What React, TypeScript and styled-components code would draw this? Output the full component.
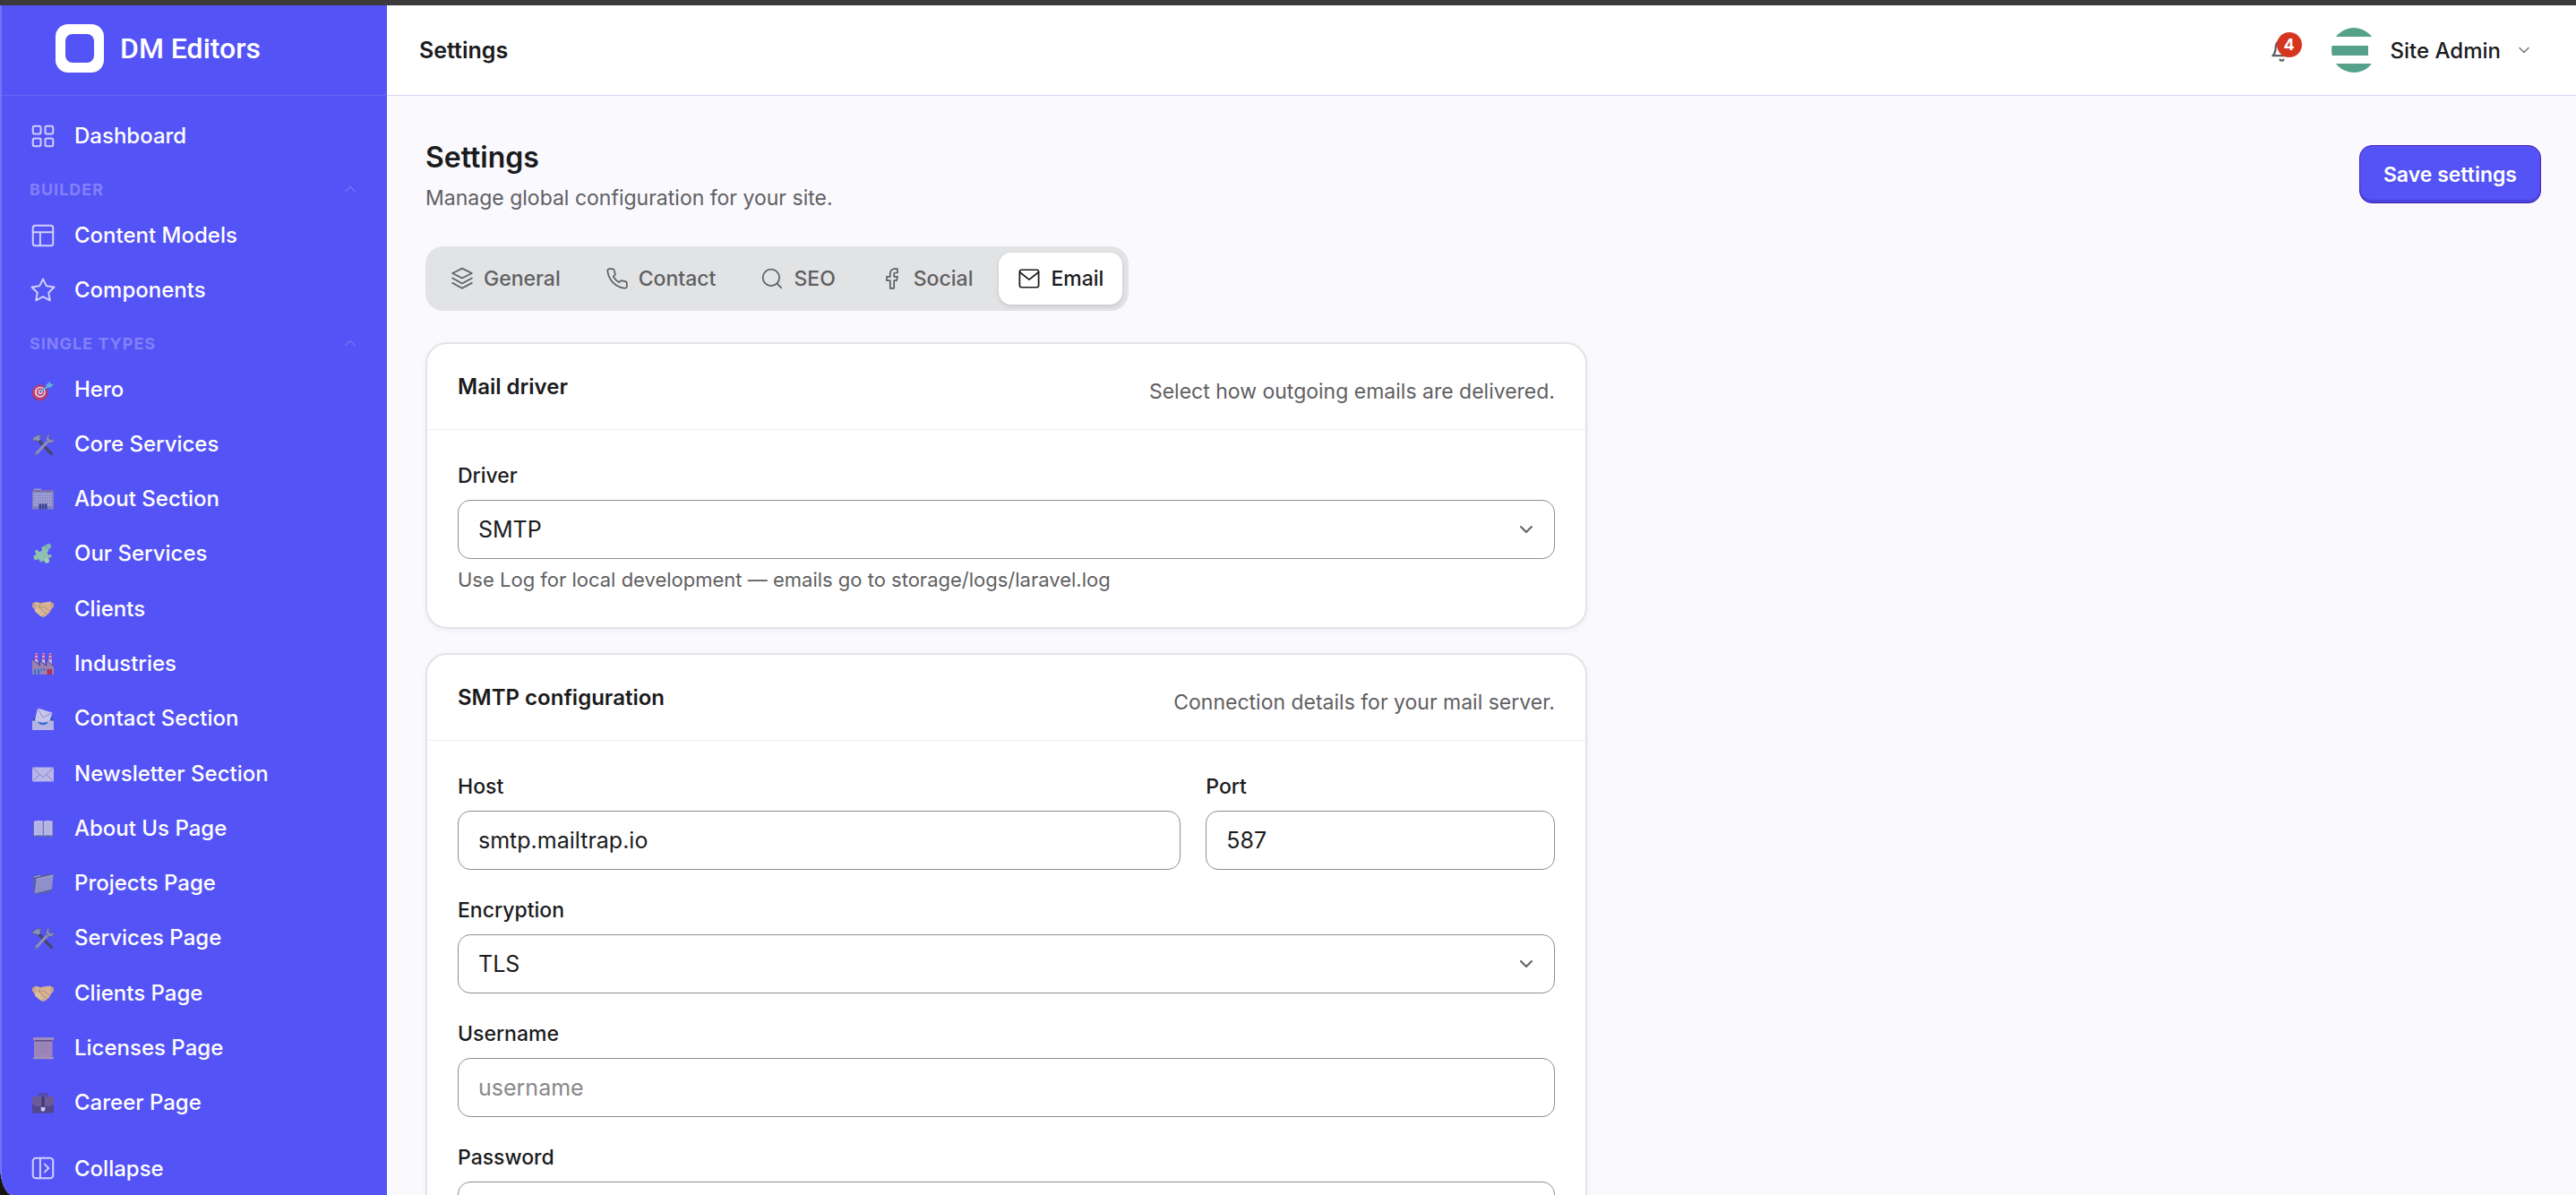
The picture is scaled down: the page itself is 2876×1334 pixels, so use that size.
import React from "react";
import styled, { createGlobalStyle } from "styled-components";

const color = {
  brand: "#5453f6",
  brandDark: "#4a22b4",
  ink: "#1b1b1d",
  muted: "#5f6062",
  border: "#8f8f92",
  canvas: "#faf9fe",
};

const GlobalStyle = createGlobalStyle`
  *, *::before, *::after { box-sizing: border-box; }
  body {
    margin: 0;
    background: #17150e;
    color: ${color.ink};
    font-family: Inter, "Liberation Sans", sans-serif;
    font-size: 23px;
  }
  h1, h2, p, ul { margin: 0; padding: 0; }
  ul { list-style: none; }
  button, input, select { font: inherit; color: inherit; }
`;

/* ---------- shell ---------- */

const Shell = styled.div`
  display: flex;
  flex-direction: column;
  height: 100vh;
  overflow: hidden;
  border-bottom-left-radius: 14px 34px;
  background: ${color.canvas};
`;

const TopEdge = styled.div`
  flex: none;
  height: 6px;
  background: #3b3b3b;
`;

const Columns = styled.div`
  display: flex;
  flex: 1;
  min-height: 0;
`;

/* ---------- sidebar ---------- */

const Sidebar = styled.aside`
  display: flex;
  flex: none;
  flex-direction: column;
  width: 432px;
  border-left: 2px solid #7574f8;
  background: ${color.brand};
  color: #fff;
`;

const Brand = styled.a`
  display: flex;
  flex: none;
  align-items: center;
  gap: 18px;
  height: 101px;
  padding: 0 60px 4px;
  border-bottom: 1px solid #6766f7;
  color: #fff;
  font-family: Roboto, "Liberation Sans", sans-serif;
  font-size: 32px;
  font-weight: 500;
  text-decoration: none;
`;

const BrandMark = styled.svg`
  width: 54px;
  height: 54px;
`;

const Nav = styled.nav`
  display: flex;
  flex: 1;
  flex-direction: column;
  min-height: 0;
  padding: 14px 14px 0;
`;

const NavList = styled.ul<{ $fill?: boolean }>`
  display: grid;
  grid-auto-rows: ${(p) => (p.$fill ? "1fr" : "61px")};
  flex: ${(p) => (p.$fill ? "1" : "none")};
`;

const NavLink = styled.a`
  display: flex;
  align-items: center;
  gap: 20px;
  height: 100%;
  padding: 0 17px;
  border-radius: 12px;
  color: #fff;
  font-size: 24px;
  font-weight: 500;
  line-height: 32px;
  text-decoration: none;
`;

const NavIcon = styled.svg`
  flex: none;
  width: 30px;
  height: 30px;
  overflow: visible;
`;

const SectionToggle = styled.button`
  display: flex;
  flex: none;
  align-items: center;
  justify-content: space-between;
  height: 50px;
  padding: 8px 17px 0 17px;
  border: 0;
  background: none;
  color: #8281f9;
  font-size: 18px;
  font-weight: 700;
  letter-spacing: 1px;
  text-transform: uppercase;
`;

const SidebarFoot = styled.div`
  flex: none;
  height: 72px;
  padding: 12px 14px 0;
`;

const CollapseButton = styled.button`
  display: flex;
  align-items: center;
  gap: 20px;
  width: 100%;
  height: 60px;
  padding: 0 17px;
  border: 0;
  background: none;
  color: #fff;
  font-size: 24px;
  font-weight: 500;
`;

/* ---------- top bar ---------- */

const Page = styled.div`
  display: flex;
  flex: 1;
  flex-direction: column;
  min-width: 0;
`;

const TopBar = styled.header`
  display: flex;
  flex: none;
  align-items: center;
  justify-content: space-between;
  height: 101px;
  padding: 0 48px 0 36px;
  border-bottom: 1px solid #d8d5fb;
  background: #fff;
`;

const TopTitle = styled.p`
  font-size: 25px;
  font-weight: 600;
`;

const TopActions = styled.div`
  display: flex;
  align-items: center;
  gap: 42px;
`;

const BellButton = styled.button`
  position: relative;
  display: flex;
  padding: 0;
  border: 0;
  background: none;
  color: ${color.muted};
`;

const Badge = styled.span`
  position: absolute;
  top: -7px;
  right: -9px;
  display: grid;
  place-items: center;
  width: 28px;
  height: 28px;
  border-radius: 50%;
  background: #d53620;
  color: #fff;
  font-size: 18px;
  font-weight: 700;
`;

const UserButton = styled.button`
  display: flex;
  align-items: center;
  gap: 16px;
  padding: 0;
  border: 0;
  background: none;
  font-size: 24px;
  font-weight: 500;

  & > svg:last-child {
    color: #77777b;
  }
`;

/* ---------- settings page ---------- */

const Main = styled.main`
  flex: 1;
  min-height: 0;
  padding: 47px 39px 47px 43px;
  overflow: auto;
  scrollbar-width: none;
`;

const PageHead = styled.div`
  display: flex;
  align-items: center;
  justify-content: space-between;
  margin-bottom: 38px;
`;

const PageTitle = styled.h1`
  margin-bottom: 7px;
  font-size: 32px;
  font-weight: 600;
  line-height: 44px;
`;

const Muted = styled.p`
  color: ${color.muted};
  font-size: 23px;
  line-height: 32px;
`;

const SaveButton = styled.button`
  height: 65px;
  margin-bottom: 2px;
  padding: 0 26px;
  border: 1px solid ${color.brandDark};
  border-radius: 14px;
  background: ${color.brand};
  box-shadow: inset 0 -3px 1px #4945dc;
  color: #fff;
  font-size: 23px;
  font-weight: 600;
`;

const Tabs = styled.div`
  display: inline-flex;
  gap: 8px;
  padding: 7px;
  border-radius: 20px;
  background: #e2e3e5;
`;

const Tab = styled.button<{ $active: boolean }>`
  display: flex;
  align-items: center;
  gap: 11px;
  height: 58px;
  padding: 0 21px;
  border: 0;
  border-radius: 14px;
  background: ${(p) => (p.$active ? "#fff" : "transparent")};
  box-shadow: ${(p) => (p.$active ? "0 2px 5px rgba(0, 0, 0, 0.13)" : "none")};
  color: ${(p) => (p.$active ? color.ink : color.muted)};
  font-size: 23px;
  font-weight: 500;
`;

const Form = styled.form`
  display: grid;
  gap: 27px;
  max-width: 1297px;
  margin-top: 35px;
`;

const Card = styled.section`
  border: 2px solid #e4e4e7;
  border-radius: 24px;
  background: #fff;
  box-shadow: 0 2px 6px rgba(30, 30, 60, 0.05);
`;

const CardHead = styled.div`
  display: flex;
  align-items: flex-end;
  justify-content: space-between;
  height: 96px;
  padding: 0 34px 26px;
  border-bottom: 1px solid #efeff1;
`;

const CardTitle = styled.h2`
  font-size: 24px;
  font-weight: 600;
  line-height: 42px;
`;

const CardBody = styled.div`
  display: grid;
  grid-template-columns: repeat(12, 1fr);
  gap: 28px;
  padding: 34px 34px 38px;
`;

const Field = styled.div<{ $span: number }>`
  display: flex;
  flex-direction: column;
  grid-column: span ${(p) => p.$span};
`;

const Label = styled.label`
  margin-bottom: 10px;
  font-size: 23px;
  font-weight: 500;
  line-height: 34px;
`;

const Input = styled.input`
  width: 100%;
  height: 66px;
  padding: 0 22px;
  border: 1px solid ${color.border};
  border-radius: 14px;
  outline: 0;
  background: #fff;
  font-size: 25px;

  &::placeholder {
    color: #88888b;
    opacity: 1;
  }
`;

const SelectWrap = styled.div`
  display: grid;
  align-items: center;

  & > * {
    grid-area: 1 / 1;
  }

  & > svg {
    justify-self: end;
    margin-right: 20px;
    color: ${color.muted};
    pointer-events: none;
  }
`;

const Select = styled(Input).attrs({ as: "select" })`
  appearance: none;
`;

const Hint = styled.p`
  margin-top: 8px;
  color: ${color.muted};
  font-size: 22px;
  line-height: 30px;
`;

/* ---------- line icons ---------- */

const linePaths: Record<string, React.ReactNode> = {
  grid: (
    <>
      <rect x="3" y="3" width="7" height="7" rx="1.4" />
      <rect x="14" y="3" width="7" height="7" rx="1.4" />
      <rect x="3" y="14" width="7" height="7" rx="1.4" />
      <rect x="14" y="14" width="7" height="7" rx="1.4" />
    </>
  ),
  layout: (
    <>
      <rect x="3" y="3" width="18" height="18" rx="2" />
      <path d="M3 9h18M9.5 9v12" />
    </>
  ),
  star: (
    <path d="M12 2l3.09 6.26L22 9.27l-5 4.87 1.18 6.88L12 17.77l-6.18 3.25L7 14.14 2 9.27l6.91-1.01z" />
  ),
  collapse: (
    <>
      <rect x="3" y="3" width="18" height="18" rx="2.5" />
      <path d="M9.5 3v18M13.5 8.5l3.5 3.5-3.5 3.5" />
    </>
  ),
  layers: (
    <path d="M12 1.500L2 6.500l10 5 10-5zM2 16.500l10 5.500 10-5.500M2 11.500l10 5.500 10-5.500" />
  ),
  phone: (
    <path d="M22 16.92v3a2 2 0 0 1-2.18 2 19.79 19.79 0 0 1-8.63-3.07 19.5 19.5 0 0 1-6-6A19.79 19.79 0 0 1 2.12 4.18 2 2 0 0 1 4.11 2h3a2 2 0 0 1 2 1.72c.13.96.36 1.9.7 2.81a2 2 0 0 1-.45 2.11L8.09 9.91a16 16 0 0 0 6 6l1.27-1.27a2 2 0 0 1 2.11-.45c.91.34 1.85.57 2.81.7A2 2 0 0 1 22 16.92z" />
  ),
  search: (
    <>
      <circle cx="11" cy="11" r="8.5" />
      <path d="M21.500 21.500l-4.500-4.500" />
    </>
  ),
  facebook: (
    <path d="M17.500 2h-3A4.500 4.500 0 0 0 10 6.500V10H6.500v4H10v8h4v-8h2.700l.8-4H14V7a1 1 0 0 1 1-1h2.500z" />
  ),
  mail: (
    <>
      <rect x="2.200" y="3" width="19.600" height="18" rx="2" />
      <path d="M2.500 5.500L12 13l9.500-7.500" />
    </>
  ),
  bell: (
    <path d="M18 8A6 6 0 0 0 6 8c0 7-3 9-3 9h18s-3-2-3-9M13.73 21a2 2 0 0 1-3.46 0" />
  ),
  down: <path d="M6 9l6 6 6-6" />,
  up: <path d="M6 15l6-6 6 6" />,
};

type LineProps = { name: string; size?: number; stroke?: number; opacity?: number };

const Line = ({ name, size = 26, stroke = 1.6, opacity = 1 }: LineProps) => (
  <svg
    width={size}
    height={size}
    viewBox="0 0 24 24"
    fill="none"
    stroke="currentColor"
    strokeWidth={stroke}
    strokeLinecap="round"
    strokeLinejoin="round"
    opacity={opacity}
    aria-hidden="true"
  >
    {linePaths[name]}
  </svg>
);

/* ---------- pictograms of the content types (30 x 30 grid, 25 px drawing) ---------- */

const art: Record<string, React.ReactNode> = {
  target: (
    <>
      <circle cx="11.5" cy="18.5" r="9" fill="#a83a72" />
      <circle cx="11.5" cy="18" r="7.8" fill="#c2406e" />
      <circle cx="11.8" cy="17.8" r="6" fill="#d9cdec" />
      <circle cx="12" cy="17.6" r="4.3" fill="#c2406e" />
      <circle cx="12.2" cy="17.4" r="2.6" fill="#d9cdec" />
      <circle cx="12.4" cy="17.2" r="1.2" fill="#a83a72" />
      <path d="M12.5 17l9-6.5" stroke="#5cb0d8" strokeWidth="1.8" />
      <path d="M19 12.500l-.5-3 4.500-3.500 .4 2.600 3.600.8-4 3.400z" fill="#5fb2dd" />
    </>
  ),
  tools: (
    <>
      <path d="M9 9.500l15.500 16" stroke="#45476f" strokeWidth="3.400" strokeLinecap="round" />
      <path d="M3 10.500c1-4 5-6.500 11-6l-2.500 2.200 1 2.800-3 2.500-2.500-1.700-2 .7z" fill="#8d90b8" stroke="#53557f" strokeWidth=".7" />
      <path d="M20.500 11.500L7 26" stroke="#8f92b8" strokeWidth="3" strokeLinecap="round" />
      <path d="M22.500 4l-1.300 4 2.300 2.300 3.800-1.500c.3 3.200-2.300 5.400-5.800 4.500l-2.500-2.400C18 7.500 19.500 4.500 22.500 4z" fill="#8d90bd" stroke="#565985" strokeWidth=".7" />
      <circle cx="7" cy="26" r=".9" fill="#54567d" />
    </>
  ),
  office: (
    <>
      <rect x="5" y="3.500" width="8" height="2" fill="#9c98c4" />
      <rect x="3" y="5" width="24" height="21.500" fill="#8483bd" />
      <rect x="3" y="5" width="24" height="2" fill="#7a6ea6" />
      <path d="M4.500 9.500h21M4.500 12.500h21M4.500 15.500h21M4.500 18.500h21M4.500 21.500h21" stroke="#a9ade6" strokeWidth="1.800" strokeDasharray="1.900 .7" />
      <rect x="10.500" y="20.500" width="9" height="6" fill="#3a4190" />
      <path d="M13.500 20.500v6M16.500 20.500v6" stroke="#7f8cd8" strokeWidth=".7" />
    </>
  ),
  puzzle: (
    <g transform="rotate(-27 15 15)">
      <rect x="8" y="8" width="14.500" height="14.500" rx="1.200" fill="#8fc0b2" />
      <circle cx="15.200" cy="23.800" r="2.900" fill="#a3cdb9" />
      <circle cx="6.300" cy="15.200" r="2.900" fill="#8fc0b2" />
      <circle cx="24.200" cy="10.500" r="2.900" fill="#7fb4b0" />
      <rect x="19" y="8" width="4" height="5" fill="#7fb4b0" />
      <circle cx="14" cy="9" r="2.600" fill={color.brand} />
      <circle cx="21.800" cy="17.500" r="2.300" fill={color.brand} />
      <path d="M8.500 22.500h4M18 22.500h4.500" stroke="#5f9490" strokeWidth=".9" />
    </g>
  ),
  handshake: (
    <>
      <path
        d="M3 9l4-2.200L11.500 8l3.500-.3 4-.6 4-.5L27 9l-.3 3.500-2.500 2.500-1.700 3.500-3 3-3 2.200-3-.2-3-2-4-3.500L5 14.500 3 12z"
        fill="#d6b394"
      />
      <path d="M3 9l4-2.200v5.500L5 14.500 3 12zM27 9l-4-2.400.5 5.900 1.200 1.900L26.700 12.500z" fill="#c6a08c" />
      <path
        d="M12.500 8.500L10 13c1.500 1.300 3.200.2 4.500-1.200 3 1 5.500 3 8 5.700M12.500 15.500l6.500 5M10.500 18l5 4"
        stroke="#a5836f"
        strokeWidth=".9"
        strokeLinecap="round"
      />
      <path d="M7.500 17.500l2-2.300M9.700 19.500l2.200-2.500M12.300 21.500l2-2.300" stroke="#e7cfb0" strokeWidth="1.400" strokeLinecap="round" />
    </>
  ),
  factory: (
    <>
      <path d="M6 12l.7-9h2l.7 11M13.800 13l.7-10h2l.7 12M21.300 13l.7-10h2l1 12" fill="#c9b9de" />
      <path d="M6.500 5h2.400M6.300 9h2.800M14.300 5h2.400M14.100 9h2.800M21.800 5h2.400M21.600 9h2.900" stroke="#d0406d" strokeWidth="2" />
      <path d="M3 27V10l8.500 7v-5.500l7.500 6V11l8 7v9z" fill="#9a82ac" />
      <path d="M3 10l8.500 7v-5.500l7.500 6V11l8 7" fill="none" stroke="#5b4c8c" strokeWidth="1" />
      <path d="M5 21h6v6H5zM12.500 20h4.500v3h-4.500z" fill="#3f6fcb" />
      <path d="M8 21v6M14.700 20v3" stroke="#aebcee" strokeWidth=".8" />
      <rect x="19.500" y="21" width="5.500" height="6" fill="#b0305f" />
    </>
  ),
  inbox: (
    <>
      <path d="M3 17.500l3-4h18l3 4-1 5H4z" fill="#2b52ad" />
      <path d="M9 3.500L25.500 8.500 22 19.500c-4 2-9 2-14 0l-2-3z" fill="#c6c5ec" />
      <path d="M9 3.500l6 10.500 10.500-5.500" fill="none" stroke="#8987c4" strokeWidth=".9" />
      <path d="M3 17.500h6c2 5.500 10 5.500 12 0h6V28H3z" fill="#b6b4e6" />
      <path d="M9 18.500c4 1.500 8 1.500 12 0-2 5-10 5-12 0z" fill="#2f6bd0" />
    </>
  ),
  envelope: (
    <>
      <rect x="3" y="7.500" width="24" height="16" rx=".8" fill="#b9b7ea" />
      <path d="M3.500 8l10 9.500c1 .8 2 .8 3 0l10-9.500M3.500 23l8-7.500M26.500 23l-8-7.500" fill="none" stroke="#8583c6" strokeWidth="1" />
    </>
  ),
  book: (
    <>
      <path d="M4 7.500h22.500V24H17l-2 .8-2-.8H4z" fill="#5a6bb0" />
      <path d="M5 6.500c3.500-.8 7-.8 10 0v16.300c-3-.8-6.500-.8-10 0zM15.500 6.500c3.500-.8 7-.8 10 0v16.300c-3-.8-6.500-.8-10 0z" fill="#bab8e8" />
      <path d="M7 10h6M7 13h6M7 16h6M7 19h6M17.500 10h6M17.500 13h6M17.500 16h6M17.500 19h6" stroke="#a19fda" strokeWidth=".8" />
      <path d="M15.200 7v16" stroke="#6664a8" strokeWidth="1" />
    </>
  ),
  folder: (
    <>
      <path d="M4 7l7-1.800 1.500 1.200L26 4v3L23 25 5 27z" fill="#59609a" />
      <path d="M7.500 10.500L26.500 6l-1.500 15.500L5.500 26.500z" fill="#8f90ca" />
      <path d="M7.500 10.500L26.500 6M5 8l7-1.500" stroke="#b4b5e6" strokeWidth=".9" />
    </>
  ),
  scroll: (
    <>
      <rect x="5" y="5" width="20.500" height="21" fill="#9c86b8" />
      <path d="M8 11h14M8 14h14M8 17h14M8 20h14" stroke="#9079b2" strokeWidth=".8" />
      <rect x="4" y="3" width="23" height="3.400" rx="1" fill="#a18dbb" />
      <path d="M5.500 6.800h20" stroke="#544488" strokeWidth="1.400" />
      <rect x="4" y="25" width="23" height="2.200" rx="1" fill="#a592bd" />
    </>
  ),
  briefcase: (
    <>
      <path d="M11 8V5.500h8V8" fill="none" stroke="#574a7f" strokeWidth="1.800" />
      <rect x="3" y="8" width="24" height="18.500" rx="1.200" fill="#54468c" />
      <path d="M3 9.500c0-1 .5-1.500 1.500-1.500h21c1 0 1.500.5 1.500 1.500V16l-4 3H7l-4-3z" fill="#6c5b98" />
      <path d="M13.500 8h3v11h-3z" fill="#44376f" />
      <path d="M12.700 20h4.600v3.500L15 25l-2.300-1.500z" fill="#c3cbf0" />
    </>
  ),
};

const Art = ({ name }: { name: string }) => (
  <NavIcon viewBox="0 0 30 30" fill="none" aria-hidden="true">
    {art[name]}
  </NavIcon>
);

/* ---------- data ---------- */

const builderLinks = [
  { label: "Content Models", icon: "layout" },
  { label: "Components", icon: "star" },
];

const singleTypes = [
  { label: "Hero", icon: "target" },
  { label: "Core Services", icon: "tools" },
  { label: "About Section", icon: "office" },
  { label: "Our Services", icon: "puzzle" },
  { label: "Clients", icon: "handshake" },
  { label: "Industries", icon: "factory" },
  { label: "Contact Section", icon: "inbox" },
  { label: "Newsletter Section", icon: "envelope" },
  { label: "About Us Page", icon: "book" },
  { label: "Projects Page", icon: "folder" },
  { label: "Services Page", icon: "tools" },
  { label: "Clients Page", icon: "handshake" },
  { label: "Licenses Page", icon: "scroll" },
  { label: "Career Page", icon: "briefcase" },
];

const tabs = [
  { label: "General", icon: "layers" },
  { label: "Contact", icon: "phone" },
  { label: "SEO", icon: "search" },
  { label: "Social", icon: "facebook" },
  { label: "Email", icon: "mail" },
];

/* ---------- parts ---------- */

const SideNav = () => (
  <Sidebar>
    <Brand href="#">
      <BrandMark viewBox="0 0 54 54" aria-hidden="true">
        <rect width="54" height="54" rx="14" fill="#fff" />
        <rect x="11" y="11" width="32" height="32" rx="8" fill={color.brand} />
      </BrandMark>
      DM Editors
    </Brand>
    <Nav>
      <NavList>
        <li>
          <NavLink href="#">
            <Line name="grid" size={30} opacity={0.72} />
            Dashboard
          </NavLink>
        </li>
      </NavList>
      <SectionToggle type="button">
        Builder
        <Line name="up" size={20} stroke={1.6} opacity={0.7} />
      </SectionToggle>
      <NavList>
        {builderLinks.map((item) => (
          <li key={item.label}>
            <NavLink href="#">
              <Line name={item.icon} size={30} opacity={0.72} />
              {item.label}
            </NavLink>
          </li>
        ))}
      </NavList>
      <SectionToggle type="button">
        Single types
        <Line name="up" size={20} stroke={1.6} opacity={0.7} />
      </SectionToggle>
      <NavList $fill>
        {singleTypes.map((item) => (
          <li key={item.label}>
            <NavLink href="#">
              <Art name={item.icon} />
              {item.label}
            </NavLink>
          </li>
        ))}
      </NavList>
    </Nav>
    <SidebarFoot>
      <CollapseButton type="button">
        <Line name="collapse" size={30} opacity={0.72} />
        Collapse
      </CollapseButton>
    </SidebarFoot>
  </Sidebar>
);

const Avatar = () => (
  <svg width="50" height="50" viewBox="0 0 50 50" aria-hidden="true">
    <clipPath id="avatar-round">
      <circle cx="25" cy="25" r="25" />
    </clipPath>
    <g clipPath="url(#avatar-round)" fill="#55a18a">
      <rect width="50" height="10" />
      <rect y="20" width="41" height="11" />
      <rect y="40" width="50" height="10" />
    </g>
  </svg>
);

type SelectFieldProps = { id: string; label: string; options: string[]; hint?: string };

const SelectField = ({ id, label, options, hint }: SelectFieldProps) => (
  <Field $span={12}>
    <Label htmlFor={id}>{label}</Label>
    <SelectWrap>
      <Select id={id} defaultValue={options[0]}>
        {options.map((option) => (
          <option key={option}>{option}</option>
        ))}
      </Select>
      <Line name="down" size={24} stroke={2} />
    </SelectWrap>
    {hint && <Hint>{hint}</Hint>}
  </Field>
);

type TextFieldProps = {
  id: string;
  label: string;
  span?: number;
  type?: string;
  value?: string;
  placeholder?: string;
};

const TextField = ({ id, label, span = 12, type = "text", value, placeholder }: TextFieldProps) => (
  <Field $span={span}>
    <Label htmlFor={id}>{label}</Label>
    <Input id={id} type={type} defaultValue={value} placeholder={placeholder} />
  </Field>
);

export default function App() {
  return (
    <Shell>
      <GlobalStyle />
      <TopEdge />
      <Columns>
        <SideNav />
        <Page>
          <TopBar>
            <TopTitle>Settings</TopTitle>
            <TopActions>
              <BellButton type="button" aria-label="Notifications">
                <Line name="bell" size={27} stroke={2} />
                <Badge>4</Badge>
              </BellButton>
              <UserButton type="button">
                <Avatar />
                Site Admin
                <Line name="down" size={20} stroke={1.8} />
              </UserButton>
            </TopActions>
          </TopBar>
          <Main>
            <PageHead>
              <div>
                <PageTitle>Settings</PageTitle>
                <Muted>Manage global configuration for your site.</Muted>
              </div>
              <SaveButton type="submit" form="email-settings">
                Save settings
              </SaveButton>
            </PageHead>
            <Tabs role="tablist">
              {tabs.map((tab) => (
                <Tab
                  key={tab.label}
                  type="button"
                  role="tab"
                  aria-selected={tab.label === "Email"}
                  $active={tab.label === "Email"}
                >
                  <Line name={tab.icon} />
                  {tab.label}
                </Tab>
              ))}
            </Tabs>
            <Form id="email-settings" onSubmit={(e) => e.preventDefault()}>
              <Card>
                <CardHead>
                  <CardTitle>Mail driver</CardTitle>
                  <Muted>Select how outgoing emails are delivered.</Muted>
                </CardHead>
                <CardBody>
                  <SelectField
                    id="driver"
                    label="Driver"
                    options={["SMTP", "Log"]}
                    hint="Use Log for local development — emails go to storage/logs/laravel.log"
                  />
                </CardBody>
              </Card>
              <Card>
                <CardHead>
                  <CardTitle>SMTP configuration</CardTitle>
                  <Muted>Connection details for your mail server.</Muted>
                </CardHead>
                <CardBody>
                  <TextField id="host" label="Host" span={8} value="smtp.mailtrap.io" />
                  <TextField id="port" label="Port" span={4} value="587" />
                  <SelectField id="encryption" label="Encryption" options={["TLS", "SSL", "None"]} />
                  <TextField id="username" label="Username" placeholder="username" />
                  <TextField id="password" label="Password" type="password" />
                </CardBody>
              </Card>
            </Form>
          </Main>
        </Page>
      </Columns>
    </Shell>
  );
}
